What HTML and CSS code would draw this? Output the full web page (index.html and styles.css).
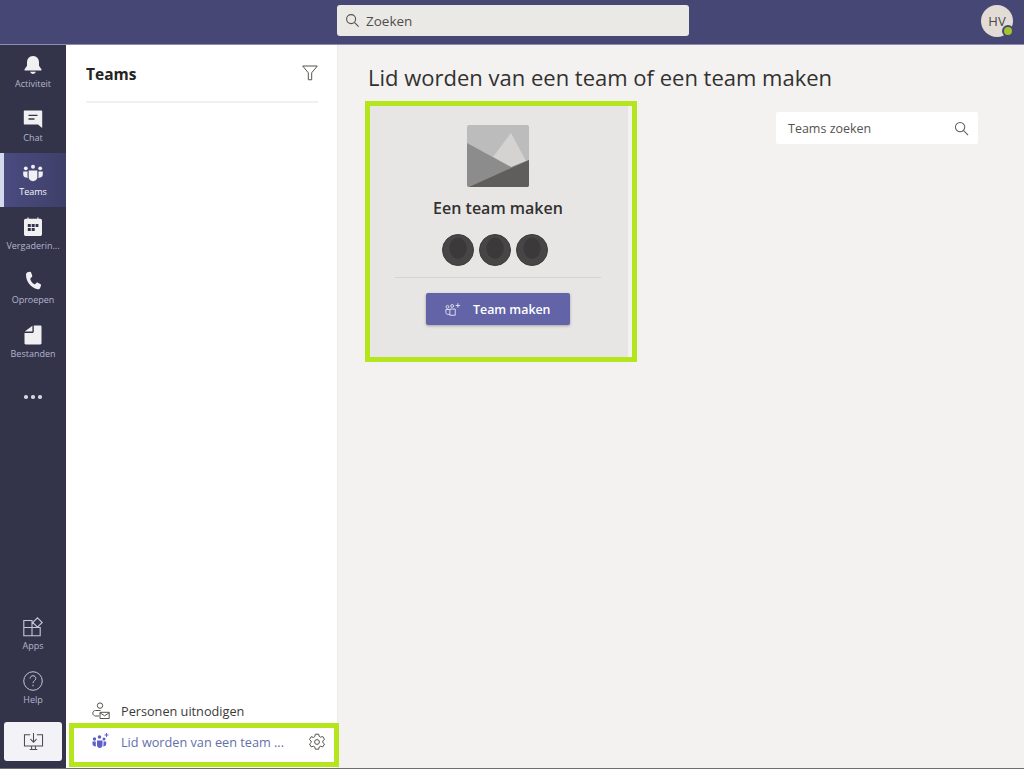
FILE: index.html
```html
<!DOCTYPE html>
<html lang="nl">
<head>
<meta charset="utf-8">
<title>Teams</title>
<link rel="stylesheet" href="styles.css">
</head>
<body>
<header class="topbar">
  <div class="search">
    <svg class="search-icon" viewBox="0 0 16 16"><circle cx="6.500" cy="6.500" r="4.800"/><path d="M10 10l4.600 4.600"/></svg>
    <span>Zoeken</span>
  </div>
  <div class="avatar">HV<span class="status"></span></div>
</header>
<div class="app">
  <nav class="rail">
    <div class="rail-item">
      <svg viewBox="0 0 20 20"><path class="fill" d="M10 1C6 1 4 4 4 7.500v3.300L1.600 14.200c-.4.700 0 1.300.7 1.300h15.400c.7 0 1.100-.6.700-1.300L16 10.800V7.500C16 4 14 1 10 1zM7.200 16.800c.4 1.300 1.500 2.200 2.800 2.200s2.400-.9 2.800-2.200z"/></svg>
      <span>Activiteit</span>
    </div>
    <div class="rail-item">
      <svg viewBox="0 0 20 20"><path class="fill" d="M1.500 1.500h17c.4 0 .7.300.7.700v16.800l-4.200-3.500H1.500c-.4 0-.7-.3-.7-.7V2.200c0-.4.300-.7.700-.7z"/><path class="cut" d="M5.500 6.300h9M5.500 10h6"/></svg>
      <span>Chat</span>
    </div>
    <div class="rail-item active">
      <svg viewBox="0 0 20 20"><circle class="fill" cx="10" cy="3.800" r="2"/><circle class="fill" cx="2.800" cy="5.300" r="1.900"/><circle class="fill" cx="17.200" cy="5.300" r="1.900"/><path class="fill" d="M.2 8.500h4.300v4.500c0 .7.100 1.200.4 1.800C2.300 15 .2 13.700.2 11.500zM15.500 8.500h4.300v3c0 2.200-2.100 3.500-4.700 3.300.3-.6.400-1.100.4-1.800z"/><path class="fill" d="M5.700 7.500h8.600v6.800c0 2.200-1.800 3.900-4.300 3.900s-4.300-1.700-4.300-3.900z"/></svg>
      <span>Teams</span>
    </div>
    <div class="rail-item">
      <svg viewBox="0 0 20 20"><path class="fill" d="M2.800 1.800h1.700V.6h1.200v1.200h8.600V.6h1.200v1.200h1.700c1 0 1.800.8 1.800 1.800v13.600c0 1-.8 1.800-1.800 1.800H2.800c-1 0-1.800-.8-1.800-1.800V3.600c0-1 .8-1.800 1.800-1.800z"/><path class="cut-fill" d="M4.800 7h3v3h-3zM8.700 7h3v3h-3zM12.600 7h2.800v3h-2.800zM4.800 11h3v3h-3zM8.700 11h3v3h-3z"/></svg>
      <span>Vergaderin...</span>
    </div>
    <div class="rail-item">
      <svg viewBox="0 0 20 20"><path class="fill" d="M4.500 1.300l2.200-.6c.6-.1 1.100.1 1.300.6l1.200 3.200c.2.500 0 1.100-.4 1.400L7.600 7.200c-.3.200-.4.600-.3 1 .8 2.400 2 3.800 3.900 5 .3.200.7.200 1-.1l1.200-1.200c.4-.4 1-.5 1.500-.2l2.700 1.600c.4.300.6.800.4 1.300l-.8 2.200c-.4 1.100-1.500 1.700-2.600 1.500C7.800 16.900 3.100 10.400 3 4c0-1.200.5-2.300 1.500-2.700z"/></svg>
      <span>Oproepen</span>
    </div>
    <div class="rail-item">
      <svg viewBox="0 0 20 20"><path class="fill" d="M10.800.5h6.500c.7 0 1.200.5 1.200 1.200v16.600c0 .7-.5 1.200-1.200 1.200H2.700c-.7 0-1.200-.5-1.200-1.200V7.900h7.800c.8 0 1.500-.7 1.500-1.500zM9.400.8v5.600c0 .1-.1.200-.2.200H1.800z"/></svg>
      <span>Bestanden</span>
    </div>
    <div class="rail-item more">
      <i></i><i></i><i></i>
    </div>
    <div class="rail-spacer"></div>
    <div class="rail-item">
      <svg class="line" viewBox="0 0 20 20"><path d="M.8 3.500h8.200v7H.8zM.8 10.500H9v8.200H.8zM9 10.500h8.200v8.200H9zM14.500.8l4.700 4.700-4.700 4.700-4.800-4.700z"/></svg>
      <span>Apps</span>
    </div>
    <div class="rail-item">
      <svg class="line" viewBox="0 0 22 22"><circle cx="11" cy="11" r="10.200"/><path d="M7.800 8.400c0-1.900 1.400-3.200 3.200-3.200s3.100 1.200 3.100 2.900c0 2.700-3.100 2.500-3.100 5.100"/><path d="M11 15v1.800"/></svg>
      <span>Help</span>
    </div>
    <div class="download">
      <svg viewBox="0 0 22 20"><path d="M7.500 3H1.500v11.800h19V3h-6M11 1v9.500M7.800 7.500l3.200 3.200 3.200-3.200M7 18.500h8M9 15v3.500M13 15v3.500"/></svg>
    </div>
  </nav>
  <aside class="panel">
    <div class="panel-head">
      <h2>Teams</h2>
      <svg class="filter" viewBox="0 0 16 16"><path d="M.7 1h14.600L9.700 7.800v7l-3.400-.1V7.800z"/></svg>
    </div>
    <div class="panel-fill"></div>
    <div class="panel-row invite">
      <svg class="row-icon" viewBox="0 0 18 18"><circle cx="8" cy="3.600" r="2.700"/><path d="M8.500 8.500H3.500C2 8.500.8 9.500.8 11.200c0 1.600 1.200 2.600 2.800 2.800h3.400"/><path d="M8 10.300h9.200v6.200H8zM8 10.800l4.600 3 4.600-3"/></svg>
      <span>Personen uitnodigen</span>
    </div>
    <div class="panel-row join">
      <svg class="row-icon team" viewBox="0 0 18 16"><circle cx="7.500" cy="5" r="1.800"/><circle cx="2.500" cy="7" r="1.700"/><circle cx="12" cy="7" r="1.500"/><path d="M.5 9.500h3.300v3.500c0 .5.100 1 .3 1.500C2 14.500.5 13.500.5 12zM5 8.500h5.500v4.800c0 1.500-1.200 2.700-2.700 2.700S5 14.800 5 13.300zM11.500 9.500h2.700V12c0 1.300-1.300 2.400-3.100 2.500.2-.5.400-1 .4-1.500z"/><path class="plus" d="M14.500 1v4M12.500 3h4"/></svg>
      <span class="join-label">Lid worden van een team ...</span>
      <svg class="gear" viewBox="0 0 18 18"><path d="M7.300 1.200h3.400l.5 2.200 1.400.8 2.200-.7 1.700 2.900-1.700 1.500v1.600l1.700 1.500-1.700 2.900-2.200-.7-1.400.8-.5 2.200H7.300l-.5-2.200-1.400-.8-2.200.7-1.700-2.900 1.700-1.500V8.100L1.500 6.600l1.700-2.900 2.200.7 1.400-.8z"/><circle cx="9" cy="9" r="2.400"/></svg>
    </div>
  </aside>
  <main class="main">
    <h1>Lid worden van een team of een team maken</h1>
    <div class="content">
      <section class="card">
        <div class="card-inner">
          <svg class="team-image" viewBox="0 0 62 62">
            <rect width="62" height="62" rx="2" fill="#bcbcbc"/>
            <path d="M44 8l15 28-15 6-18-10z" fill="#d4d3d2"/>
            <path d="M0 18l44 24 18-7v25c0 1-1 2-2 2H2c-1 0-2-1-2-2z" fill="#8c8c8c"/>
            <path d="M2 62l60-27v25c0 1-1 2-2 2z" fill="#605e5d"/>
          </svg>
          <h3>Een team maken</h3>
          <div class="people">
            <span class="person"></span><span class="person"></span><span class="person"></span>
          </div>
          <div class="divider"></div>
          <button class="make-btn">
            <svg viewBox="0 0 18 16"><circle cx="2.800" cy="5" r="1.600"/><circle cx="8" cy="4" r="1.600"/><path d="M5.500 7.500h6v7h-6zM5.500 8H1v3.500c0 1 .8 2 2 2h2.500"/><path d="M14.500 1v5M12 3.500h5"/></svg>
            <span>Team maken</span>
          </button>
        </div>
      </section>
      <div class="team-search">
        <span>Teams zoeken</span>
        <svg viewBox="0 0 16 16"><circle cx="6.500" cy="6.500" r="5"/><path d="M10 10l5 5"/></svg>
      </div>
    </div>
  </main>
</div>
</body>
</html>
```
FILE: styles.css
```css
* { box-sizing: border-box; }
html, body { height: 100%; }
body {
  margin: 0;
  height: 769px;
  overflow: hidden;
  display: flex;
  flex-direction: column;
  font-family: "Open Sans", "Noto Sans", "Liberation Sans", sans-serif;
  color: #252423;
  background: #f3f2f1;
  border-bottom: 1px solid #6f6e6c;
}
.topbar {
  height: 45px;
  flex: none;
  background: #464775;
  border-bottom: 1px solid #8b8cb0;
  display: flex;
  align-items: center;
  justify-content: center;
  position: relative;
}
.search {
  width: 352px;
  height: 31px;
  margin-top: -3px;
  margin-left: 2px;
  background: #ebe9e6;
  border-radius: 3px;
  display: flex;
  align-items: center;
  gap: 6px;
  padding-left: 8px;
  font-size: 13.500px;
  color: #4f4e4d;
}
.search-icon { width: 15px; height: 15px; fill: none; stroke: #55544f; stroke-width: 1.200; }
.avatar {
  position: absolute;
  left: 981px;
  top: 5px;
  width: 32px;
  height: 32px;
  border-radius: 50%;
  background: #e3dcd6;
  color: #4a4746;
  font-size: 13px;
  display: flex;
  align-items: center;
  justify-content: center;
}
.status {
  position: absolute;
  right: -1px;
  bottom: 0;
  width: 12px;
  height: 12px;
  border-radius: 50%;
  background: #a5c42c;
  border: 2px solid #464775;
}
.app { flex: 1; display: flex; min-height: 0; }
.rail {
  width: 66px;
  flex: none;
  background: #33344a;
  display: flex;
  flex-direction: column;
  padding-bottom: 7px;
}
.rail-item {
  height: 54px;
  flex: none;
  display: flex;
  flex-direction: column;
  align-items: center;
  padding-top: 10px;
  color: #b4b5cf;
  font-size: 9px;
  line-height: 13px;
  white-space: nowrap;
}
.rail-item svg { width: 20px; height: 20px; margin-bottom: 2px; }
.rail-item .fill { fill: #f0f0f2; }
.rail-item .cut { fill: none; stroke: #33344a; stroke-width: 1.300; }
.rail-item .cut-fill { fill: #33344a; }
.rail-item.active {
  background: linear-gradient(90deg, #4a4b80, #3f4068);
  border-left: 4px solid #d5d9ec;
  padding-right: 4px;
  color: #f5f5fa;
}
.rail-item .line { fill: none; stroke: #c6c7d6; stroke-width: 1.100; }
.rail-item.more {
  flex-direction: row;
  align-items: flex-start;
  justify-content: center;
  gap: 3.500px;
  padding-top: 26px;
}
.more i { width: 3.500px; height: 3.500px; border-radius: 50%; background: #d5d5de; }
.rail-spacer { flex: 1; }
.download {
  width: 58px;
  height: 39px;
  flex: none;
  margin: 7px 0 0 4px;
  background: #f3f2f7;
  border-radius: 3px;
  display: flex;
  align-items: center;
  justify-content: center;
}
.download svg { width: 21px; height: 19px; fill: none; stroke: #4e4d4c; stroke-width: 1.100; }
.panel {
  width: 272px;
  flex: none;
  background: #fff;
  border-right: 1px solid #ececec;
  display: flex;
  flex-direction: column;
}
.panel-head {
  height: 58px;
  flex: none;
  margin: 0 19px 0 20px;
  padding-top: 2px;
  border-bottom: 2px solid #f1f0ef;
  display: flex;
  align-items: center;
  justify-content: space-between;
}
.panel-head h2 { margin: 0; font-size: 15.500px; font-weight: 700; color: #252423; }
.filter { width: 16px; height: 16px; margin-top: -2px; fill: none; stroke: #55544f; stroke-width: 1; }
.panel-fill { flex: 1; }
.panel-row {
  display: flex;
  align-items: center;
  flex: none;
  font-size: 12.700px;
  white-space: nowrap;
}
.invite { height: 28px; padding: 4px 0 0 26px; gap: 11px; color: #3b3a39; }
.row-icon { width: 18px; height: 18px; fill: none; stroke: #55544f; stroke-width: 1; }
.join {
  height: 44px;
  margin: 0 -2px 1px 3px;
  padding: 0 0 6px 18px;
  border: 5px solid #b5e61d;
  background: #fff;
  position: relative;
  z-index: 1;
}
.row-icon.team { fill: #5b5fc7; stroke: none; width: 18px; height: 16px; margin-right: 11px; margin-top: -4px; }
.row-icon.team .plus { fill: none; stroke: #5b5fc7; stroke-width: 1; }
.join-label { color: #6370a8; width: 170px; overflow: hidden; }
.gear { width: 18px; height: 18px; margin-left: 17px; fill: none; stroke: #55544f; stroke-width: 1; }
.main {
  flex: 1;
  min-width: 0;
  padding: 0 0 0 30px;
}
.main h1 {
  margin: 0;
  padding-top: 15px;
  height: 56px;
  font-size: 22px;
  font-weight: 400;
  line-height: 34px;
  color: #323130;
  white-space: nowrap;
}
.content { display: flex; align-items: flex-start; }
.card {
  width: 272px;
  height: 261px;
  margin-left: -3px;
  border: 5px solid #b5e61d;
  background: #f3f2f1;
  padding-right: 4px;
  flex: none;
}
.card-inner {
  height: 100%;
  background: #e8e6e5;
  display: flex;
  flex-direction: column;
  align-items: center;
  padding: 19px 2px 0 0;
}
.team-image { width: 62px; height: 62px; display: block; }
.card-inner h3 {
  margin: 11px 0 0;
  font-size: 16px;
  line-height: 21px;
  font-weight: 600;
  color: #323130;
}
.people { display: flex; gap: 5px; margin: 15px 6px 0 0; }
.person {
  width: 32px;
  height: 32px;
  border-radius: 50%;
  border: 1px solid #3c3a3a;
  background:
    radial-gradient(ellipse 9px 11px at 50% 44%, #3b393a 92%, transparent 100%),
    #484546;
}
.divider { width: 206px; height: 1px; background: #d6d4d2; margin-top: 11px; }
.make-btn {
  margin-top: 15px;
  width: 144px;
  height: 32px;
  border: 0;
  border-radius: 2px;
  background: #6264a7;
  box-shadow: 0 1px 3px rgba(0, 0, 0, .3);
  color: #fff;
  font: 600 12.400px "Open Sans", "Noto Sans", sans-serif;
  display: flex;
  align-items: center;
  padding: 0 0 0 19px;
  gap: 12px;
}
.make-btn svg { width: 16px; height: 15px; fill: none; stroke: #e8e8f4; stroke-width: 1; }
.team-search {
  width: 202px;
  height: 32px;
  margin: 11px 0 0 139px;
  background: #fff;
  border-radius: 2px;
  display: flex;
  align-items: center;
  justify-content: space-between;
  padding: 0 9px 0 12px;
  font-size: 12.500px;
  color: #55534f;
}
.team-search svg { width: 15px; height: 15px; fill: none; stroke: #605e5c; stroke-width: 1.100; }
```
